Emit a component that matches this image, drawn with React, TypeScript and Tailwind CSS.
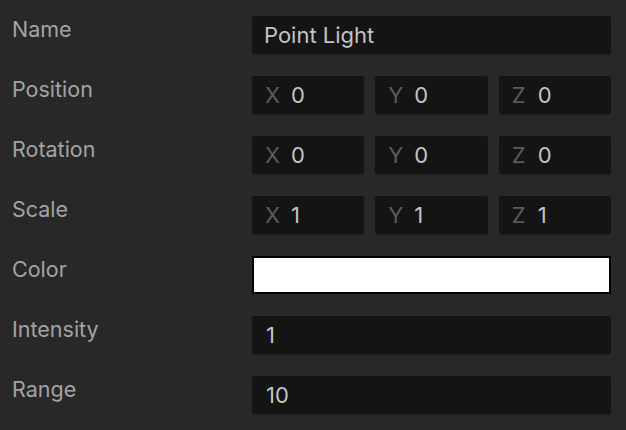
import React from 'react';

const inputBox = "h-[38px] rounded-[3px] bg-[#141414] flex items-center text-[22px] text-[#c4c4c4] shadow-[0_1px_1px_rgba(0,0,0,0.25)]";

interface RowProps {
    label: string;
    children: React.ReactNode;
}

const Row: React.FC<RowProps> = ({ label, children }) => (
    <div className="flex items-start">
        <div className="w-[240px] shrink-0 text-[21.5px] leading-[26px] text-[#a3a3a3]">{label}</div>
        <div className="flex-1">{children}</div>
    </div>
);

const Vec3: React.FC<{ values: string[] }> = ({ values }) => (
    <div className="flex gap-[11px]">
        {['X', 'Y', 'Z'].map((axis, i) => (
            <div key={axis} className={cn(inputBox, "flex-1 pl-[13px]")}>
                <span className="text-[#5c5c5c] w-[26px]">{axis}</span>
                <span>{values[i]}</span>
            </div>
        ))}
    </div>
);

function cn(...c: string[]) {
    return c.join(' ');
}

export default function App() {
    return (
        <div
            className="w-[626px] h-[430px] bg-[#282828] pt-4 pl-3 pr-[15px] flex flex-col gap-[22px]"
            style={{ fontFamily: 'Inter, "Noto Sans", sans-serif' }}
        >
            <Row label="Name">
                <div className={cn(inputBox, "px-3")}>Point Light</div>
            </Row>
            <Row label="Position">
                <Vec3 values={['0', '0', '0']} />
            </Row>
            <Row label="Rotation">
                <Vec3 values={['0', '0', '0']} />
            </Row>
            <Row label="Scale">
                <Vec3 values={['1', '1', '1']} />
            </Row>
            <Row label="Color">
                <div className="h-[38px] bg-white border-2 border-black" />
            </Row>
            <Row label="Intensity">
                <div className={cn(inputBox, "px-3.5")}>1</div>
            </Row>
            <Row label="Range">
                <div className={cn(inputBox, "px-3.5")}>10</div>
            </Row>
        </div>
    );
}
